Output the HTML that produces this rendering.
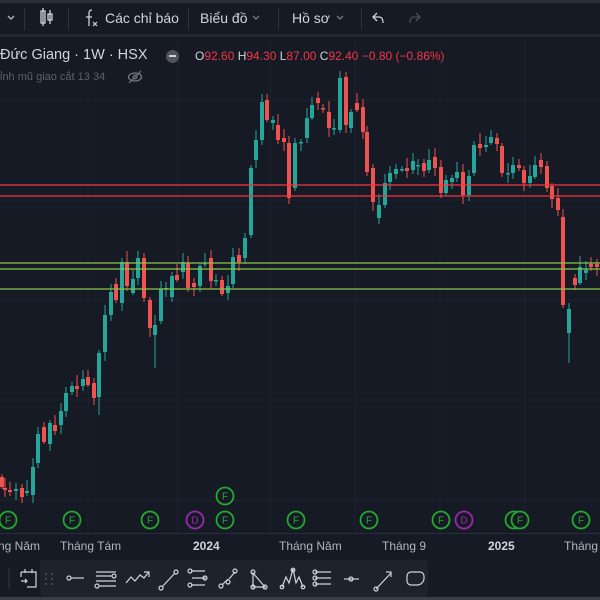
<!DOCTYPE html>
<html><head><meta charset="utf-8"><style>
*{margin:0;padding:0;box-sizing:border-box}
body{width:600px;height:600px;background:#161a25;overflow:hidden;position:relative;font-family:"Liberation Sans",sans-serif;color:#d1d4dc}
.top{position:absolute;left:0;top:0;width:600px;height:37px;background:#161a25;border-bottom:3px solid #242833}
.topstrip{position:absolute;left:0;top:0;width:600px;height:3px;background:#2a2e39}
.t{position:absolute;font-size:14px;color:#d1d4dc;white-space:nowrap}
.sep{position:absolute;top:8px;width:1px;height:22px;background:#2e323d}
.leg{position:absolute;white-space:nowrap}
.ax{position:absolute;top:539px;font-size:12px;color:#b2b5be;white-space:nowrap}
.bot{position:absolute;left:0;top:560px;width:600px;height:37px;background:#161a25}
.panel{position:absolute;left:40px;top:560px;width:388px;height:37px;background:#1e222d;border-radius:4px}
.botstrip{position:absolute;left:0;top:597px;width:600px;height:3px;background:#3a3e48}
</style></head><body>
<div class="top"></div><div class="topstrip"></div>
<svg style="position:absolute;left:0;top:0" width="600" height="40">
<path d="M8 16l3 3 3-3" stroke="#b2b5be" stroke-width="1.4" fill="none"/>
<rect x="41" y="11" width="4" height="12" fill="none" stroke="#d1d4dc" stroke-width="1.3"/><line x1="43" y1="8" x2="43" y2="26" stroke="#d1d4dc" stroke-width="1.3"/>
<rect x="48" y="14" width="4" height="6" fill="none" stroke="#d1d4dc" stroke-width="1.3"/><line x1="50" y1="10" x2="50" y2="24" stroke="#d1d4dc" stroke-width="1.3"/>
<path d="M92 10c-3 0-3 2-3 4v12M86 17h6" stroke="#d1d4dc" stroke-width="1.3" fill="none"/><path d="M93 22l4 4M97 22l-4 4" stroke="#d1d4dc" stroke-width="1.2"/>
<path d="M253 16l3 3 3-3M337 16l3 3 3-3" stroke="#787b86" stroke-width="1.3" fill="none"/>
<path d="M377 13l-4 4 4 4M373 17h6c3 0 4 2 4 6" stroke="#d1d4dc" stroke-width="1.3" fill="none"/>
<path d="M416 13l4 4-4 4M420 17h-6c-3 0-4 2-4 6" stroke="#4a4e59" stroke-width="1.3" fill="none"/>
</svg>
<div class="sep" style="left:24px"></div><div class="sep" style="left:68px"></div><div class="sep" style="left:188px"></div><div class="sep" style="left:278px"></div><div class="sep" style="left:361px"></div>
<div class="t" style="left:105px;top:10px">Các chỉ báo</div>
<div class="t" style="left:200px;top:10px">Biểu đồ</div>
<div class="t" style="left:292px;top:10px">Hồ sơ</div>

<svg id="ch" style="position:absolute;left:0;top:40px" width="600" height="495">
<g stroke="#1f2330" stroke-width="1">
<line x1="88" y1="0" x2="88" y2="495"/><line x1="178" y1="0" x2="178" y2="495"/><line x1="270" y1="0" x2="270" y2="495"/><line x1="355" y1="0" x2="355" y2="495"/><line x1="440" y1="0" x2="440" y2="495"/><line x1="525" y1="0" x2="525" y2="495"/>
<line x1="0" y1="60" x2="600" y2="60"/><line x1="0" y1="160" x2="600" y2="160"/><line x1="0" y1="260" x2="600" y2="260"/><line x1="0" y1="360" x2="600" y2="360"/><line x1="0" y1="460" x2="600" y2="460"/>
</g>
<g id="cd"></g>
<line x1="0" y1="145" x2="600" y2="145" stroke="#f23645" stroke-width="1.3"/>
<line x1="0" y1="156" x2="600" y2="156" stroke="#f23645" stroke-width="1.3"/>
<line x1="0" y1="223" x2="600" y2="223" stroke="#8bc34a" stroke-width="1.3"/>
<line x1="0" y1="229" x2="600" y2="229" stroke="#8bc34a" stroke-width="1.3"/>
<line x1="0" y1="249" x2="600" y2="249" stroke="#8bc34a" stroke-width="1.3"/>
<g id="ev" font-family="Liberation Sans" font-size="10" text-anchor="middle"></g>
</svg>
<svg style="position:absolute;left:0;top:533px" width="600" height="1"><line x1="0" y1="0.5" x2="600" y2="0.5" stroke="#2a2e39"/></svg>

<div class="leg" style="left:0;top:47px;font-size:14.5px;color:#d1d4dc">Đức Giang · 1W · HSX</div>
<div style="position:absolute;left:166px;top:50px;width:13px;height:13px;border-radius:50%;background:#50535e"></div>
<div style="position:absolute;left:169px;top:55px;width:7px;height:2px;background:#d1d4dc"></div>
<div class="leg" style="left:195px;top:49px;font-size:12px;color:#d1d4dc">O<span style="color:#f23645">92.60</span> H<span style="color:#f23645">94.30</span> L<span style="color:#f23645">87.00</span> C<span style="color:#f23645">92.40</span> <span style="color:#f23645">−0.80 (−0.86%)</span></div>
<div class="leg" style="left:0;top:71px;font-size:11px;color:#5d606b">ỉnh mũ giao cắt 13 34</div>
<svg style="position:absolute;left:127px;top:70px" width="16" height="14"><ellipse cx="8" cy="7" rx="6.5" ry="4" fill="none" stroke="#787b86" stroke-width="1.2"/><circle cx="8" cy="7" r="2" fill="none" stroke="#787b86"/><line x1="2" y1="13" x2="14" y2="1" stroke="#787b86" stroke-width="1.2"/></svg>

<div class="ax" style="left:-2px">ng Năm</div>
<div class="ax" style="left:60px">Tháng Tám</div>
<div class="ax" style="left:193px;font-weight:bold;color:#d1d4dc">2024</div>
<div class="ax" style="left:279px">Tháng Năm</div>
<div class="ax" style="left:382px">Tháng 9</div>
<div class="ax" style="left:488px;font-weight:bold;color:#d1d4dc">2025</div>
<div class="ax" style="left:564px">Tháng N</div>

<div class="bot"></div><div class="panel"></div><div class="botstrip"></div>
<svg style="position:absolute;left:0;top:560px" width="600" height="37" fill="none" stroke="#d1d4dc" stroke-width="1.2">
<line x1="9" y1="8" x2="9" y2="29" stroke="#2e323d"/>
<path d="M21 12h15v15h-9M21 12v5M25 9v4M32 9v4M21 21h6M25 19l2 2-2 2"/>
<g fill="#50535e" stroke="none"><circle cx="46" cy="14" r="1"/><circle cx="52" cy="14" r="1"/><circle cx="46" cy="19" r="1"/><circle cx="52" cy="19" r="1"/><circle cx="46" cy="24" r="1"/><circle cx="52" cy="24" r="1"/></g>
<circle cx="69" cy="18" r="2"/><path d="M71 18h13"/>
<path d="M96 12h20M96 16h16M96 21h20M99 26h17"/><circle cx="114" cy="16" r="2"/><circle cx="97" cy="26" r="2"/>
<path d="M126 23l5-6 4 4 5-6 4 3 4-5M144 12h5v5"/>
<path d="M162 27l13-14"/><circle cx="161" cy="28" r="2"/><circle cx="176" cy="12" r="2"/>
<path d="M191 11h14M192 18h14M191 25h14"/><circle cx="190" cy="11" r="2"/><circle cx="205" cy="18" r="2"/><circle cx="190" cy="25" r="2"/>
<path d="M222 25l6-6M229 19l6-7"/><circle cx="221" cy="26" r="2"/><circle cx="235" cy="11" r="2"/><circle cx="228" cy="22" r="2"/>
<path d="M253 13l0 14 12 0z"/><circle cx="253" cy="12" r="2"/><circle cx="253" cy="27" r="2"/><circle cx="265" cy="27" r="2"/>
<path d="M282 27l4-10 3 6 4-14 3 14 3-6 4 10"/><circle cx="282" cy="27" r="1.8"/><circle cx="293" cy="10" r="1.8"/><circle cx="303" cy="27" r="1.8"/>
<path d="M315 12h16M315 18h16M315 24h16"/><circle cx="315" cy="12" r="2"/><circle cx="315" cy="18" r="2"/><circle cx="315" cy="24" r="2"/>
<path d="M344 19h15"/><circle cx="351" cy="19" r="2"/>
<path d="M376 29l15-16M386 12h5v5"/><circle cx="376" cy="29" r="2"/>
<path d="M411 12h9a4 4 0 0 1 4 4v2a7 7 0 0 1-7 7h-6a4 4 0 0 1-4-4v-5a4 4 0 0 1 4-4z"/>
</svg>
<script>
var G="#26a69a",R="#ef5350";
var d=[[2,477,487,R],[5,488,490,R],[10,490,492,R],[16,489,491,G],[22,488,497,R],[27,491,493,G],[33,467,495,G],[38,434,463,G],[44,427,442,R],[50,423,444,G],[55,425,431,R],[61,411,425,G],[66,393,411,G],[72,386,392,G],[77,386,389,R],[83,379,386,G],[88,377,385,R],[94,383,398,R],[99,353,397,G],[105,315,352,G],[111,292,315,G],[116,284,300,R],[122,262,303,G],[127,262,286,R],[133,279,293,G],[138,258,278,G],[144,258,298,R],[150,300,328,R],[155,325,335,G],[161,289,321,G],[166,288,289,G],[172,276,297,G],[177,275,280,R],[183,262,272,G],[188,263,288,R],[194,283,287,R],[200,266,286,G],[205,263,264,G],[211,258,281,R],[216,280,281,G],[222,280,294,R],[228,286,293,G],[233,257,284,G],[239,255,262,R],[245,238,258,G],[251,168,235,G],[256,140,160,G],[262,102,140,G],[267,100,120,R],[273,120,123,G],[278,125,140,R],[284,138,142,R],[289,143,198,R],[295,143,188,G],[301,142,143,G],[307,118,138,G],[312,105,118,G],[318,98,103,R],[323,108,109,R],[329,112,128,R],[334,128,129,G],[340,78,130,G],[346,77,125,R],[351,112,128,G],[357,103,110,R],[363,107,132,R],[367,132,172,R],[373,168,202,R],[379,205,218,G],[385,183,205,G],[390,173,182,G],[396,169,174,G],[402,169,170,G],[407,168,171,R],[413,161,170,G],[418,165,166,G],[424,163,171,R],[429,160,170,G],[435,157,168,R],[441,167,193,R],[446,180,193,G],[452,178,182,G],[457,172,178,G],[463,172,195,R],[469,176,195,G],[474,145,173,G],[480,144,148,R],[486,145,147,G],[491,137,143,G],[497,138,144,R],[502,146,173,R],[508,173,174,G],[513,165,173,G],[519,165,168,R],[524,170,183,R],[530,176,183,G],[535,165,177,G],[541,160,167,R],[547,166,188,R],[552,186,199,R],[558,198,210,R],[563,217,305,R],[569,309,333,G],[575,278,285,R],[580,267,283,G],[586,270,273,G],[591,264,267,R],[597,264,267,R]];
var s="";d.forEach(function(c,i){var t=c[1]-40,b=c[2]-40,w=(i*7)%9+3;s+='<line x1="'+c[0]+'" x2="'+c[0]+'" y1="'+(t-w)+'" y2="'+(b+((i*5)%8)+2)+'" stroke="'+c[3]+'" stroke-width="1"/><rect x="'+(c[0]-2)+'" y="'+t+'" width="4" height="'+Math.max(1.5,b-t)+'" fill="'+c[3]+'"/>';});
s+='<line x1="569" x2="569" y1="290" y2="323" stroke="'+G+'"/><line x1="99" x2="99" y1="357" y2="375" stroke="'+G+'"/><line x1="155" x2="155" y1="295" y2="328" stroke="'+G+'"/>';
document.getElementById("cd").innerHTML=s;
var e=[[8,"F"],[72,"F"],[150,"F"],[195,"D"],[225,"F"],[296,"F"],[369,"F"],[441,"F"],[464,"D"],[514,"F"],[520,"F"],[581,"F"]],h="";
function ci(x,y,k){var col=k=="F"?"#22ab2e":"#9c27b0";return '<circle cx="'+x+'" cy="'+y+'" r="8.5" fill="#161a25" stroke="'+col+'" stroke-width="1.8"/><text x="'+x+'" y="'+(y+3.6)+'" fill="'+col+'">'+k+'</text>';}
e.forEach(function(a){h+=ci(a[0],480,a[1]);});h+=ci(225,456,"F");
document.getElementById("ev").innerHTML=h;
</script>
</body></html>
